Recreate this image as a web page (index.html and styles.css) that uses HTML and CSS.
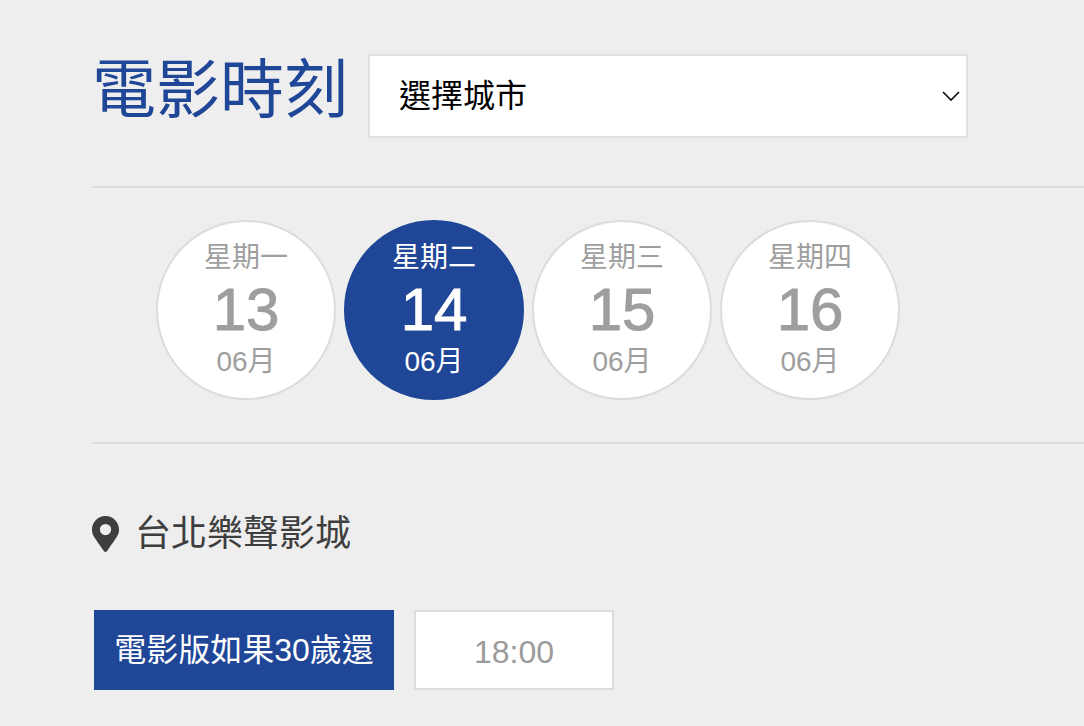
FILE: index.html
```html
<!DOCTYPE html>
<html lang="zh-Hant">
<head>
  <meta charset="UTF-8">
  <meta name="viewport" content="width=device-width, initial-scale=1.0">
  <title>電影時刻</title>
  <link rel="stylesheet" href="styles.css">
</head>
<body>

  <main class="showtimes">
    <!-- Title and city filter -->
    <header class="filter">
      <h1><label for="city">電影時刻</label></h1>
      <div class="city-select">
        <select id="city" name="city">
          <option>選擇城市</option>
          <option>台北</option>
        </select>
        <svg class="chevron" width="18" height="12" viewBox="0 0 18 12" aria-hidden="true">
          <path d="M1 2l8 8 8-8" fill="none" stroke="#111" stroke-width="1.7"/>
        </svg>
      </div>
    </header>

    <!-- Dates -->
    <div class="dates">
      <button type="button" class="date">
        <span>星期一</span>
        <strong>13</strong>
        <span>06月</span>
      </button>
      <button type="button" class="date active">
        <span>星期二</span>
        <strong>14</strong>
        <span>06月</span>
      </button>
      <button type="button" class="date">
        <span>星期三</span>
        <strong>15</strong>
        <span>06月</span>
      </button>
      <button type="button" class="date">
        <span>星期四</span>
        <strong>16</strong>
        <span>06月</span>
      </button>
    </div>

    <!-- Cinema -->
    <section class="cinema">
      <h2>
        <svg class="pin" width="27" height="36" viewBox="0 0 384 512" aria-hidden="true">
          <path d="M172 502C27 291 0 270 0 192 0 86 86 0 192 0s192 86 192 192c0 78-27 99-172 310-10 13-30 13-40 0zM192 272a80 80 0 1 0 0-160 80 80 0 0 0 0 160z" fill="currentColor"/>
        </svg>
        台北樂聲影城
      </h2>
      <div class="sessions">
        <span class="version">電影版如果30歲還</span>
        <button type="button" class="time">18:00</button>
      </div>
    </section>
  </main>

  <script>
    const dates = document.querySelectorAll('.date');

    dates.forEach(function (date) {
      date.addEventListener('click', function () {
        document.querySelector('.date.active').classList.remove('active');
        date.classList.add('active');
      });
    });
  </script>

</body>
</html>
```
FILE: styles.css
```css
* {
  box-sizing: border-box;
}

body {
  margin: 0;
  background: #eee;
  color: #3e3e3e;
  font-family: "Liberation Sans", "Noto Sans CJK TC", sans-serif;
}

button,
select {
  font-family: inherit;
}

h1,
h2 {
  margin: 0;
  font-weight: 400;
}

.showtimes {
  padding: 54px 0 36px 92px;
}

.filter {
  display: flex;
  align-items: flex-start;
  gap: 20px;
  padding-bottom: 48px;
  border-bottom: 2px solid #dcdcdc;
}

.filter h1 {
  color: #1f4697;
  font-size: 64px;
  line-height: 72px;
  white-space: nowrap;
}

.city-select {
  position: relative;
  flex: 0 1 600px;
}

.city-select select {
  display: block;
  width: 100%;
  height: 84px;
  padding: 0 40px 0 29px;
  border: 2px solid #e2e2e2;
  border-radius: 0;
  background: #fff;
  color: #000;
  font-size: 32px;
  appearance: none;
}

.chevron {
  position: absolute;
  top: 36px;
  right: 8px;
  pointer-events: none;
}

.dates {
  display: flex;
  gap: 8px;
  padding: 32px 64px 42px;
  border-bottom: 2px solid #dcdcdc;
}

.date {
  display: flex;
  flex-direction: column;
  align-items: center;
  justify-content: center;
  width: 180px;
  height: 180px;
  padding: 0;
  border: 2px solid #dcdcdc;
  border-radius: 50%;
  background: #fff;
  color: #9e9e9e;
  font-size: 28px;
  line-height: 40px;
  cursor: pointer;
}

.date strong {
  font-size: 60px;
  font-weight: 400;
  line-height: 64px;
  -webkit-text-stroke: 1px currentColor;
}

.date.active {
  border-color: #1f4697;
  background: #1f4697;
  color: #fff;
}

.cinema {
  padding-top: 64px;
}

.cinema h2 {
  display: flex;
  align-items: center;
  gap: 16px;
  font-size: 36px;
  line-height: 52px;
}

.sessions {
  display: flex;
  gap: 20px;
  padding: 50px 2px 0;
}

.version,
.time {
  height: 80px;
  font-size: 32px;
  line-height: 80px;
  text-align: center;
}

.version {
  width: 300px;
  background: #1f4697;
  color: #fff;
}

.time {
  width: 200px;
  padding: 0;
  border: 2px solid #dcdcdc;
  background: #fff;
  color: #9b9b9b;
  cursor: pointer;
}
```
